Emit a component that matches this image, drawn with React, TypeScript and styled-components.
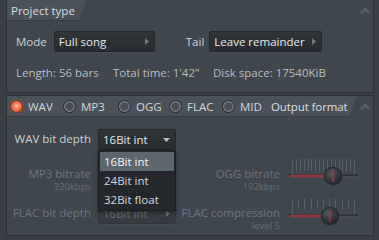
import React, { useId } from 'react';
import styled, { createGlobalStyle, css } from 'styled-components';

const Global = createGlobalStyle`
  html, body { margin: 0; padding: 0; background: #383e44; }
  body { width: 379px; height: 240px; overflow: hidden; font-family: "Open Sans", "Noto Sans", sans-serif; font-size: 11.5px; }
`;

const Page = styled.div`
  width: 379px;
  height: 240px;
  box-sizing: border-box;
  padding: 0 5px 0 6px;
  display: flex;
  flex-direction: column;
  gap: 2px;
  background: #383e44;
`;

const Section = styled.section<{ $h: number; $top?: boolean }>`
  height: ${(p) => p.$h}px;
  box-sizing: border-box;
  background: #3f464d;
  border: 1px solid #2b3035;
  border-top: ${(p) => (p.$top ? '1px solid #2b3035' : 'none')};
  display: flex;
  flex-direction: column;
`;

const Header = styled.div`
  display: flex;
  align-items: stretch;
  height: 21px;
  flex: 0 0 auto;
`;

const Tab = styled.div<{ $grow?: boolean; $pl: number; $pr: number }>`
  display: flex;
  align-items: center;
  flex: ${(p) => (p.$grow ? '1 1 auto' : '0 0 auto')};
  padding: 0 ${(p) => p.$pr}px 0 ${(p) => p.$pl}px;
  background: #4a5158;
  clip-path: polygon(0 0, 100% 0, calc(100% - 8px) 100%, 0 100%);
  box-shadow: inset 0 -1px 0 #363c42;
  color: #d8dce0;
  font-size: 11.5px;
  white-space: nowrap;
`;

const Collapse = styled.div`
  width: 16px;
  margin-left: auto;
  display: flex;
  align-items: center;
  justify-content: center;
`;

const Row = styled.div<{ $mt: number; $pl: number }>`
  display: flex;
  align-items: center;
  margin-top: ${(p) => p.$mt}px;
  padding-left: ${(p) => p.$pl}px;
`;

const FieldLabel = styled.span<{ $ml?: number; $mr: number }>`
  color: #cfd3d7;
  font-size: 11.5px;
  margin-left: ${(p) => p.$ml ?? 0}px;
  margin-right: ${(p) => p.$mr}px;
  white-space: nowrap;
`;

const Dropdown = styled.div<{ $w: number; $dim?: boolean }>`
  position: relative;
  box-sizing: border-box;
  width: ${(p) => p.$w}px;
  height: 21px;
  display: flex;
  align-items: center;
  justify-content: space-between;
  padding: 0 5px 0 4px;
  background: linear-gradient(#30353a, #282c31);
  border: 1px solid #23272b;
  border-radius: 2px;
  box-shadow: 0 1px 0 rgba(255, 255, 255, 0.04);
  color: #e6e9ec;
  font-size: 11.5px;
  white-space: nowrap;
  ${(p) =>
    p.$dim &&
    css`
      color: #6a7178;
      background: linear-gradient(#394046, #343a40);
      border-color: #30353a;
    `}
`;

const Info = styled.span<{ $w?: number }>`
  color: #b8bdc2;
  font-size: 11.5px;
  width: ${(p) => (p.$w ? `${p.$w}px` : 'auto')};
  white-space: nowrap;
`;

const RadioGroup = styled.div`
  display: flex;
  align-items: center;
`;

const RadioItem = styled.div<{ $w: number }>`
  display: flex;
  align-items: center;
  gap: 5px;
  width: ${(p) => p.$w}px;
  color: #d2d6da;
  font-size: 11.5px;
`;

const RadioDot = styled.span<{ $on?: boolean }>`
  width: 13px;
  height: 13px;
  border-radius: 50%;
  box-sizing: border-box;
  flex: 0 0 auto;
  ${(p) =>
    p.$on
      ? css`
          background: radial-gradient(circle at 50% 45%, #ffc1a6 0%, #f7845f 35%, #de5b37 70%, #a5412a 100%);
          border: 1px solid #6e3022;
          box-shadow: 0 0 3px rgba(255, 120, 80, 0.55);
        `
      : css`
          background: radial-gradient(circle, #474d53 0 40%, #5b6269 52%, #7d848b 66%, #30353a 86%);
          border: 1px solid #24282c;
        `}
`;

const Title = styled.span`
  color: #dadee2;
  font-size: 11.5px;
  letter-spacing: -0.1px;
`;

const Grid = styled.div`
  display: grid;
  grid-template-columns: 91px 78px 112px 70px;
  grid-template-rows: 21px 45px 39px;
  margin-top: 12px;
`;

const LabelBlock = styled.div<{ $pt: number; $pr: number }>`
  display: flex;
  flex-direction: column;
  align-items: flex-end;
  padding-top: ${(p) => p.$pt}px;
  padding-right: ${(p) => p.$pr}px;
`;

const GridLabel = styled.span<{ $dim?: boolean }>`
  color: ${(p) => (p.$dim ? '#6e757c' : '#cbd0d4')};
  font-size: 11.5px;
  line-height: 14px;
  white-space: nowrap;
`;

const SubLabel = styled.span`
  color: #656c73;
  font-size: 9.5px;
  line-height: 12px;
  white-space: nowrap;
`;

const Cell = styled.div<{ $pt?: number }>`
  position: relative;
  padding-top: ${(p) => p.$pt ?? 0}px;
`;

const Menu = styled.div`
  position: absolute;
  left: 0;
  top: 21px;
  width: 78px;
  box-sizing: border-box;
  padding: 1px;
  background: #24282c;
  border: 1px solid #1b1e21;
  box-shadow: 0 2px 4px rgba(0, 0, 0, 0.4);
  z-index: 5;
`;

const MenuItem = styled.div<{ $active?: boolean }>`
  height: 19px;
  display: flex;
  align-items: center;
  padding-left: 4px;
  font-size: 11.5px;
  background: ${(p) => (p.$active ? '#5b666f' : 'transparent')};
  color: ${(p) => (p.$active ? '#f2f4f6' : '#d4d8dc')};
`;

const SliderBox = styled.div<{ $pt: number }>`
  padding-top: ${(p) => p.$pt}px;
  opacity: 0.9;
`;

const RightArrow = () => (
  <svg width="4" height="7" viewBox="0 0 4 7">
    <path d="M0 0 L4 3.5 L0 7 Z" fill="#6f777e" />
  </svg>
);

const DownArrow = () => (
  <svg width="7" height="4" viewBox="0 0 7 4">
    <path d="M0 0 L7 0 L3.5 4 Z" fill="#b9bec3" />
  </svg>
);

const Chevron = () => (
  <svg width="10" height="6" viewBox="0 0 10 6">
    <polyline points="0.8,5.2 5,1 9.2,5.2" fill="none" stroke="#646c73" strokeWidth="1.4" />
  </svg>
);

function Slider({ knob, ticks, tickH, trackY, pt }: { knob: number; ticks: number; tickH: number; trackY: number; pt: number }) {
  const id = useId().replace(/:/g, '');
  const first = 4;
  const last = 66;
  const step = (last - first) / (ticks - 1);
  return (
    <SliderBox $pt={pt}>
      <svg width="72" height="30" viewBox="0 0 72 30">
        <defs>
          <radialGradient id={`k${id}`} cx="40%" cy="35%" r="70%">
            <stop offset="0%" stopColor="#565c63" />
            <stop offset="60%" stopColor="#30353a" />
            <stop offset="100%" stopColor="#1e2125" />
          </radialGradient>
        </defs>
        {Array.from({ length: ticks }).map((_, i) => {
          const x = Math.round(first + i * step) + 0.5;
          const end = i === 0 || i === ticks - 1 ? trackY - 2 : tickH;
          return <line key={i} x1={x} x2={x} y1={0} y2={end} stroke="#5c636a" strokeWidth="1" />;
        })}
        <line x1="1" x2="70" y1={trackY - 0.5} y2={trackY - 0.5} stroke="#2a2e33" strokeWidth="2" />
        <line x1="1" x2="70" y1={trackY + 1} y2={trackY + 1} stroke="#555c63" strokeWidth="1" />
        <line x1="2" x2={knob} y1={trackY} y2={trackY} stroke="#a3353c" strokeWidth="2.5" />
        <circle cx={knob} cy={trackY} r="9.5" fill="#2a2e32" opacity="0.5" />
        <circle cx={knob} cy={trackY} r="8.5" fill={`url(#k${id})`} stroke="#1f2226" strokeWidth="0.8" />
        <line x1={knob} x2={knob} y1={trackY - 6} y2={trackY + 6} stroke="#b23a41" strokeWidth="1.3" />
      </svg>
    </SliderBox>
  );
}

export default function App() {
  return (
    <>
      <Global />
      <Page>
        <Section $h={93}>
          <Header>
            <Tab $pl={4} $pr={12}>Project type</Tab>
            <Collapse>
              <Chevron />
            </Collapse>
          </Header>
          <Row $mt={10} $pl={9}>
            <FieldLabel $mr={7}>Mode</FieldLabel>
            <Dropdown $w={101}>
              <span>Full song</span>
              <RightArrow />
            </Dropdown>
            <FieldLabel $ml={31} $mr={5}>Tail</FieldLabel>
            <Dropdown $w={113}>
              <span>Leave remainder</span>
              <RightArrow />
            </Dropdown>
          </Row>
          <Row $mt={13} $pl={9}>
            <Info $w={97}>Length: 56 bars</Info>
            <Info $w={100}>Total time: 1'42"</Info>
            <Info>Disk space: 17540KiB</Info>
          </Row>
        </Section>
        <Section $h={141} $top>
          <Header>
            <Tab $grow $pl={3} $pr={8}>
              <RadioGroup>
                <RadioItem $w={53}>
                  <RadioDot $on />
                  WAV
                </RadioItem>
                <RadioItem $w={55}>
                  <RadioDot />
                  MP3
                </RadioItem>
                <RadioItem $w={51}>
                  <RadioDot />
                  OGG
                </RadioItem>
                <RadioItem $w={53}>
                  <RadioDot />
                  FLAC
                </RadioItem>
                <RadioItem $w={49}>
                  <RadioDot />
                  MID
                </RadioItem>
              </RadioGroup>
              <Title>Output format</Title>
            </Tab>
            <Collapse>
              <Chevron />
            </Collapse>
          </Header>
          <Grid>
            <LabelBlock $pt={3} $pr={7}>
              <GridLabel>WAV bit depth</GridLabel>
            </LabelBlock>
            <Cell>
              <Dropdown $w={78}>
                <span>16Bit int</span>
                <DownArrow />
              </Dropdown>
              <Menu>
                <MenuItem $active>16Bit int</MenuItem>
                <MenuItem>24Bit int</MenuItem>
                <MenuItem>32Bit float</MenuItem>
              </Menu>
            </Cell>
            <div />
            <div />

            <LabelBlock $pt={17} $pr={7}>
              <GridLabel $dim>MP3 bitrate</GridLabel>
              <SubLabel>320kbps</SubLabel>
            </LabelBlock>
            <Cell />
            <LabelBlock $pt={17} $pr={8}>
              <GridLabel $dim>OGG bitrate</GridLabel>
              <SubLabel>192kbps</SubLabel>
            </LabelBlock>
            <Slider knob={45} ticks={17} tickH={12} trackY={17} pt={9} />

            <LabelBlock $pt={11} $pr={7}>
              <GridLabel $dim>FLAC bit depth</GridLabel>
            </LabelBlock>
            <Cell $pt={8}>
              <Dropdown $w={78} $dim>
                <span>16Bit int</span>
                <RightArrow />
              </Dropdown>
            </Cell>
            <LabelBlock $pt={11} $pr={8}>
              <GridLabel $dim>FLAC compression</GridLabel>
              <SubLabel>level 5</SubLabel>
            </LabelBlock>
            <Slider knob={42} ticks={11} tickH={10} trackY={17} pt={4} />
          </Grid>
        </Section>
      </Page>
    </>
  );
}
